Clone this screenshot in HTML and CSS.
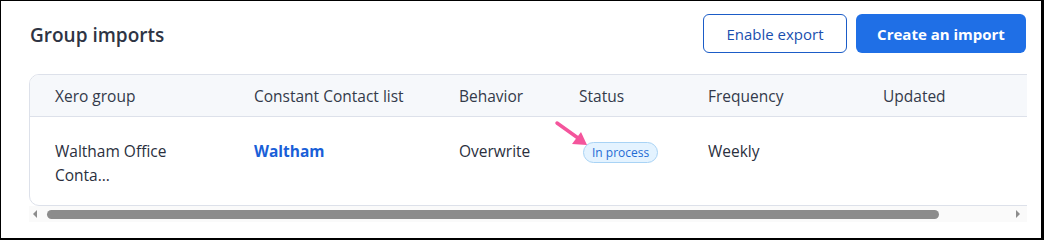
FILE: index.html
```html
<!DOCTYPE html>
<html lang="en">
<head>
  <meta charset="UTF-8">
  <title>Group imports</title>
  <link rel="stylesheet" href="styles.css">
</head>
<body>
  <div class="frame">
    <!-- Kopfzeile -->
    <div class="top">
      <h1>Group imports</h1>
      <div class="actions">
        <button class="btn btn-outline">Enable export</button>
        <button class="btn btn-primary">Create an import</button>
      </div>
    </div>

    <!-- Tabelle -->
    <div class="scroller">
      <div class="card">
        <div class="row head">
          <div>Xero group</div>
          <div>Constant Contact list</div>
          <div>Behavior</div>
          <div>Status</div>
          <div>Frequency</div>
          <div>Updated</div>
        </div>
        <div class="row body">
          <div>Waltham Office<br>Conta...</div>
          <div><a class="link">Waltham</a></div>
          <div>Overwrite</div>
          <div><span class="badge">In process</span></div>
          <div>Weekly</div>
          <div></div>
        </div>
      </div>
    </div>
    <div class="scrollbar">
      <span class="arrow left"></span>
      <span class="thumb"></span>
      <span class="arrow right"></span>
    </div>

    <svg class="pointer" width="40" height="34" viewBox="0 0 40 34">
      <line x1="3" y1="3" x2="24" y2="18" stroke="#f4559c" stroke-width="3.5" stroke-linecap="round"/>
      <polygon points="33,25 18,24 27,12" fill="#f4559c"/>
    </svg>
  </div>
</body>
</html>
```

FILE: styles.css
```css
* { margin: 0; padding: 0; box-sizing: border-box; }
body {
  background: #fff;
  font-family: 'Open Sans', 'Lato', sans-serif;
  color: #2d3343;
}
.frame {
  position: relative;
  width: 1044px;
  height: 240px;
  border: 1px solid #000;
  border-right-width: 3px;
  border-bottom-width: 2px;
  padding: 13px 15px 0 28px;
}
.top {
  display: flex;
  justify-content: space-between;
  align-items: center;
  height: 39px;
}
h1 {
  font-size: 19px;
  font-weight: 600;
  color: #2e3444;
  padding-left: 1px;
  padding-top: 2px;
}
.actions { display: flex; gap: 9px; }
.btn {
  height: 39px;
  border-radius: 6px;
  font-family: inherit;
  font-size: 15px;
  cursor: pointer;
}
.btn-outline {
  width: 144px;
  background: #fff;
  border: 1px solid #1b5cc7;
  color: #1a4fae;
}
.btn-primary {
  width: 170px;
  background: #1f6fe6;
  border: none;
  color: #fff;
  font-weight: 700;
}
.scroller {
  margin-top: 21px;
  width: 998px;
  overflow: hidden;
}
.card {
  width: 1150px;
  border: 1px solid #dde1ea;
  border-radius: 10px;
  overflow: hidden;
}
.row {
  display: grid;
  grid-template-columns: 199px 205px 120px 129px 175px 200px;
  padding-left: 25px;
  font-size: 15.5px;
}
.head {
  height: 42px;
  align-items: center;
  background: #f6f8fb;
  border-bottom: 1px solid #dde1ea;
  color: #333a4a;
}
.body {
  height: 88px;
  padding-top: 22px;
  line-height: 24px;
  color: #2a2f3d;
}
.link {
  color: #1a5fd8;
  font-weight: 700;
}
.badge {
  display: inline-block;
  margin-left: 4px;
  margin-top: 2px;
  padding: 0 8px;
  height: 21px;
  line-height: 19px;
  font-size: 12px;
  color: #1f6bd4;
  background: #e4f3ff;
  border: 1px solid #a8d3f5;
  border-radius: 11px;
}
.scrollbar {
  position: relative;
  display: flex;
  align-items: center;
  width: 998px;
  height: 16px;
  background: #fafafa;
}
.thumb {
  position: absolute;
  left: 18px;
  width: 892px;
  height: 9px;
  top: 4px;
  border-radius: 5px;
  background: #8c8c8c;
}
.arrow {
  position: absolute;
  top: 4px;
  width: 0;
  height: 0;
  border-top: 4px solid transparent;
  border-bottom: 4px solid transparent;
}
.arrow.left { left: 4px; border-right: 4px solid #8c8c8c; }
.arrow.right { right: 7px; border-left: 4px solid #8c8c8c; }
/* Hinweispfeil */
.pointer {
  position: absolute;
  left: 553px;
  top: 119px;
}
```
